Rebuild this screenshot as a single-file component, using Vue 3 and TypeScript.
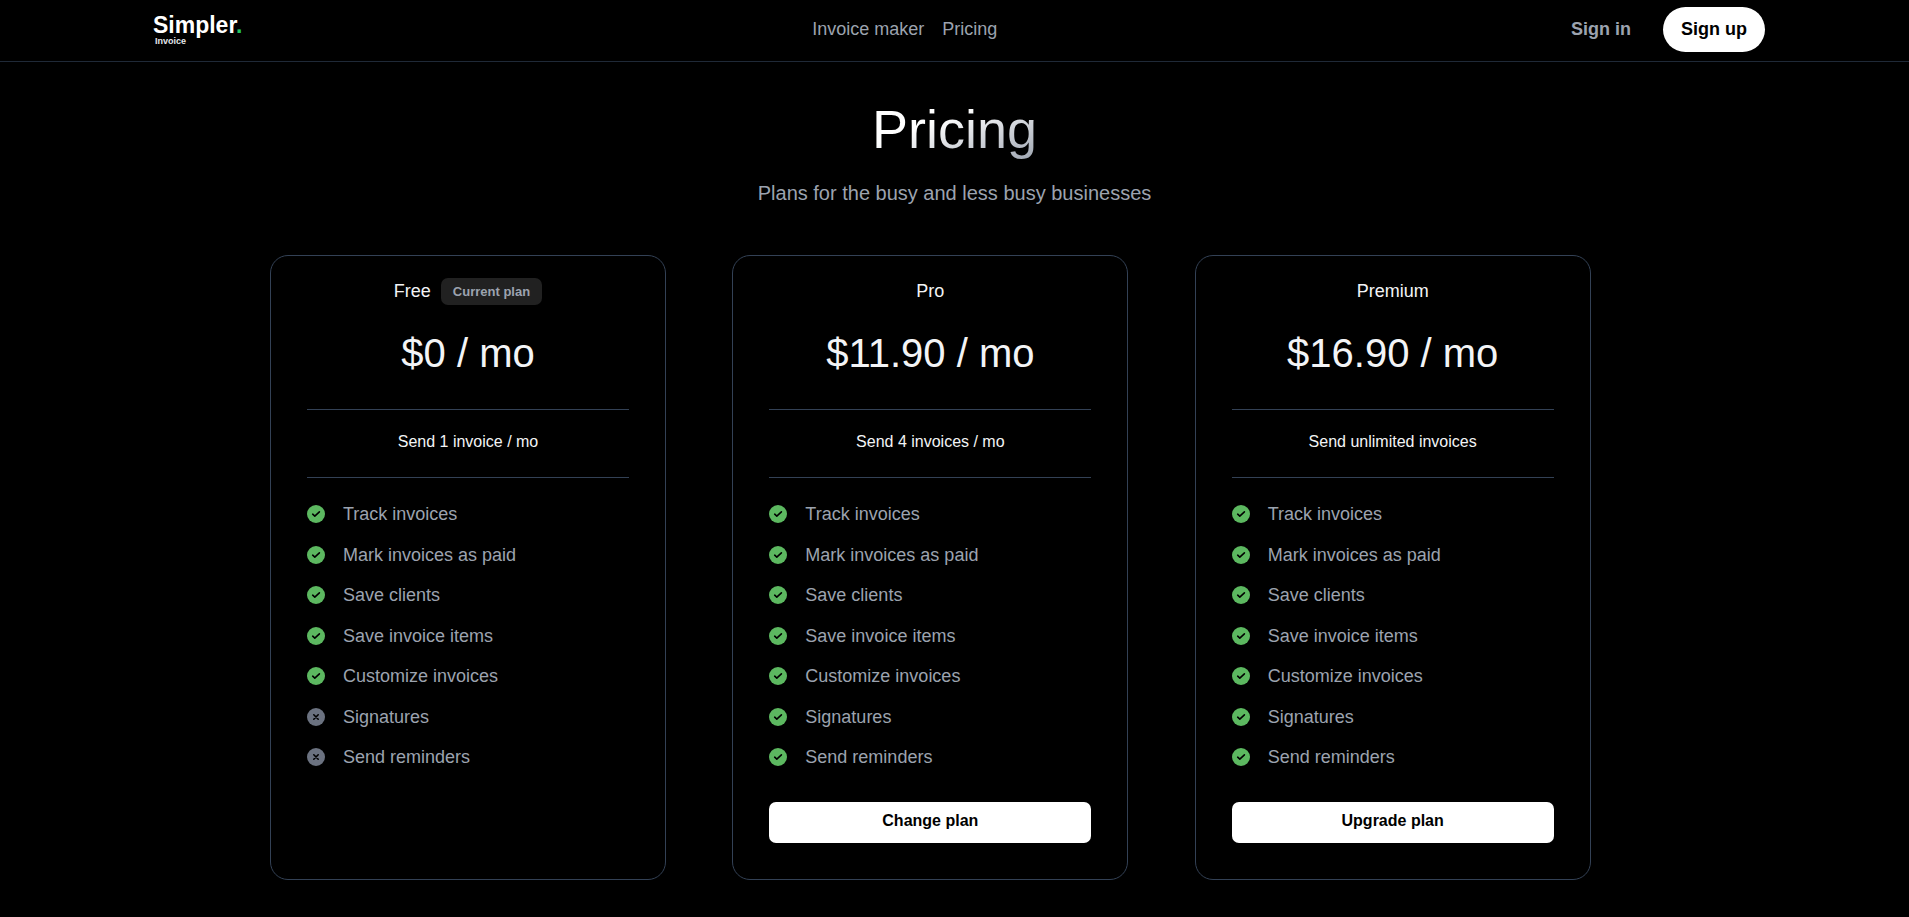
<script setup lang="ts">
interface Feature {
  label: string
  included: boolean
}

interface Plan {
  name: string
  price: string
  quota: string
  current: boolean
  action: string | null
  features: Feature[]
}

const featureNames: string[] = [
  'Track invoices',
  'Mark invoices as paid',
  'Save clients',
  'Save invoice items',
  'Customize invoices',
  'Signatures',
  'Send reminders',
]

const features = (count: number): Feature[] =>
  featureNames.map((label, index) => ({ label, included: index < count }))

const plans: Plan[] = [
  { name: 'Free', price: '$0 / mo', quota: 'Send 1 invoice / mo', current: true, action: null, features: features(5) },
  { name: 'Pro', price: '$11.90 / mo', quota: 'Send 4 invoices / mo', current: false, action: 'Change plan', features: features(7) },
  { name: 'Premium', price: '$16.90 / mo', quota: 'Send unlimited invoices', current: false, action: 'Upgrade plan', features: features(7) },
]
</script>

<template>
  <div class="page">
    <header class="header">
      <div class="bar">
        <a class="logo" href="#">
          <span class="logo-name">Simpler<span class="logo-dot">.</span></span>
          <span class="logo-sub">Invoice</span>
        </a>
        <nav class="nav">
          <a href="#">Invoice maker</a>
          <a href="#">Pricing</a>
        </nav>
        <div class="account">
          <a class="sign-in" href="#">Sign in</a>
          <button class="sign-up" type="button">Sign up</button>
        </div>
      </div>
    </header>

    <main class="main">
      <h1 class="title">Pricing</h1>
      <p class="subtitle">Plans for the busy and less busy businesses</p>

      <div class="plans">
        <section v-for="plan in plans" :key="plan.name" class="card">
          <div class="card-head">
            <h2 class="plan-name">{{ plan.name }}</h2>
            <span v-if="plan.current" class="badge">Current plan</span>
          </div>
          <p class="price">{{ plan.price }}</p>
          <p class="quota">{{ plan.quota }}</p>
          <ul class="features">
            <li v-for="feature in plan.features" :key="feature.label">
              <svg class="icon" :class="{ off: !feature.included }" viewBox="0 0 18 18" aria-hidden="true">
                <circle cx="9" cy="9" r="9" />
                <path v-if="feature.included" d="M5.7 9.2 7.8 11.1 12.4 6.9" />
                <path v-else d="M6.8 6.8 11.2 11.2M11.2 6.8 6.8 11.2" />
              </svg>
              <span>{{ feature.label }}</span>
            </li>
          </ul>
          <button v-if="plan.action" class="action" type="button">{{ plan.action }}</button>
        </section>
      </div>
    </main>
  </div>
</template>

<style>
body {
  margin: 0;
  background: #000;
}
</style>

<style scoped>
.page {
  min-height: 100vh;
  background: #000;
  color: #f3f4f6;
  font-family: "Liberation Sans", Arial, sans-serif;
  font-size: 18px;
  line-height: 1.25;
}

h1,
h2,
p,
ul {
  margin: 0;
  padding: 0;
  font-weight: 400;
}

a {
  color: inherit;
  text-decoration: none;
}

button {
  border: 0;
  background: #fff;
  color: #000;
  font-family: inherit;
  font-weight: 700;
  cursor: pointer;
}

.header {
  border-bottom: 1px solid #1f2937;
}

.bar {
  display: flex;
  align-items: center;
  justify-content: space-between;
  box-sizing: border-box;
  max-width: 1621px;
  min-height: 61px;
  margin: 0 auto;
  padding-bottom: 2px;
  color: #9ca3af;
}

.logo {
  display: flex;
  flex-direction: column;
  padding: 0 0 0 9px;
  color: #fff;
}

.logo-name {
  font-size: 23px;
  font-weight: 700;
  line-height: 22px;
}

.logo-dot {
  color: #22c55e;
}

.logo-sub {
  padding-left: 2px;
  color: #e5e7eb;
  font-size: 9px;
  font-weight: 700;
  line-height: 10px;
}

.nav {
  display: flex;
  gap: 18px;
}

.account {
  display: flex;
  align-items: center;
  gap: 28px;
}

.sign-in {
  padding: 0 4px;
  font-weight: 700;
}

.sign-up {
  height: 45px;
  padding: 0 18px;
  border-radius: 23px;
  font-size: 18px;
}

.main {
  display: flex;
  flex-direction: column;
  align-items: center;
  padding: 35px 18px;
}

.title {
  background: linear-gradient(to bottom right, #fff, #fff 38%, #9ca3af);
  background-clip: text;
  -webkit-background-clip: text;
  color: transparent;
  font-size: 54px;
  line-height: 64px;
}

.subtitle {
  margin-top: 18px;
  color: #9ca3af;
  font-size: 20px;
  line-height: 28px;
}

.plans {
  display: grid;
  grid-template-columns: repeat(3, minmax(0, 1fr));
  gap: 18px;
  width: 100%;
  max-width: 1369px;
  margin-top: 48px;
}

.card {
  display: flex;
  flex-direction: column;
  box-sizing: border-box;
  width: 100%;
  max-width: 396px;
  padding: 22px 36px 36px;
  border: 1px solid #334155;
  border-radius: 18px;
}

.card-head {
  display: flex;
  align-items: center;
  justify-content: center;
  gap: 10px;
  min-height: 27px;
}

.plan-name {
  font-size: 18px;
}

.badge {
  padding: 0 12px;
  border-radius: 7px;
  background: #212121;
  color: #9ca3af;
  font-size: 13px;
  font-weight: 700;
  line-height: 27px;
}

.price {
  margin-top: 24px;
  padding-bottom: 32px;
  border-bottom: 1px solid #334155;
  font-size: 40px;
  line-height: 48px;
  text-align: center;
}

.quota {
  padding: 20px 0 24px;
  border-bottom: 1px solid #334155;
  font-size: 16px;
  line-height: 23px;
  text-align: center;
}

.features {
  display: flex;
  flex-direction: column;
  gap: 18px;
  margin-top: 25px;
  color: #9ca3af;
  list-style: none;
}

.features li {
  display: flex;
  align-items: center;
  gap: 18px;
}

.icon {
  flex: none;
  width: 18px;
  height: 18px;
  fill: #5cb860;
}

.icon.off {
  fill: #6b7280;
}

.icon path {
  fill: none;
  stroke: #000;
  stroke-width: 1.6;
  stroke-linecap: round;
  stroke-linejoin: round;
}

.action {
  height: 41px;
  margin-top: 33px;
  padding: 0 18px 2px;
  border-radius: 7px;
  font-size: 16px;
}
</style>
